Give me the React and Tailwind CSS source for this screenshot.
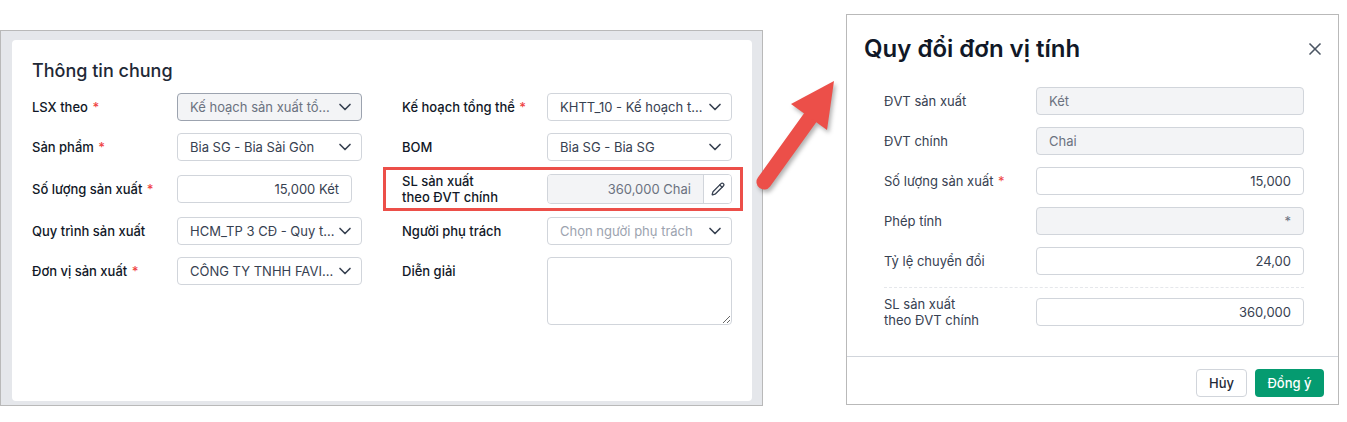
import { ChevronDown, Pencil, X } from 'lucide-react';

const font = 'font-["Inter","Liberation_Sans",sans-serif]';

function Required() {
  return <span className="ml-px text-[#ef4444]"> *</span>;
}

function Select({ value, placeholder, disabled }) {
  let tone = 'border-[#d1d5db] bg-white text-[#374151]';
  if (disabled) tone = 'border-[#9ca3af] bg-[#f3f4f6] text-[#6b7280]';
  if (placeholder) tone = 'border-[#d1d5db] bg-white text-[#9ca3af]';

  return (
    <div className={`flex h-7 w-[185px] items-center justify-between rounded border pr-[6px] pl-3 text-[13px] leading-4 ${tone}`}>
      <span className="truncate">{value}</span>
      <ChevronDown size={20} strokeWidth={2} className="shrink-0 text-[#374151]" />
    </div>
  );
}

function FormRow({ label, required, children, tall }) {
  return (
    <div className={`flex w-[330px] items-center ${tall ? 'h-8' : 'h-7'}`}>
      <div className="w-[145px] shrink-0 text-[13px] leading-4 font-medium text-[#111827]">
        {label}
        {required && <Required />}
      </div>
      {children}
    </div>
  );
}

function ModalRow({ label, required, value, readOnly, left }) {
  return (
    <div className="flex h-7 items-center">
      <div className="w-[152px] shrink-0 text-[13px] leading-4 text-[#374151]">
        {label}
        {required && <Required />}
      </div>
      <div
        className={`flex h-7 w-[268px] items-center rounded border border-[#d1d5db] px-3 text-[13px] leading-4 ${
          readOnly ? 'bg-[#f3f4f6] text-[#6b7280]' : 'bg-white text-[#374151]'
        } ${left ? 'justify-start' : 'justify-end'}`}
      >
        {value}
      </div>
    </div>
  );
}

function Arrow() {
  return (
    <svg
      className="absolute top-[70px] left-[750px] drop-shadow-[2px_3px_2px_rgba(0,0,0,0.3)]"
      width="100"
      height="130"
      viewBox="0 0 100 130"
      fill="none"
    >
      <line x1="14" y1="112" x2="60" y2="48" stroke="#ec4f49" strokeWidth="15" strokeLinecap="round" />
      <polygon points="84,11 41,34 77,60" fill="#ec4f49" />
    </svg>
  );
}

export default function App() {
  return (
    <div className={`relative flex h-[422px] w-[1347px] items-start overflow-hidden bg-white ${font}`}>
      <div className="mt-[30px] h-[376px] w-[763px] shrink-0 border border-[#b9b9b9] bg-[#e5e7eb] pt-[9px] pr-[10px] pb-[4px] pl-[11px]">
        <div className="relative h-full rounded bg-white pt-[19px] pl-5">
          <h2 className="h-[24px] text-lg leading-6 font-medium text-[#1f2937]">Thông tin chung</h2>
          <div className="mt-[10px] flex gap-10">
            <div className="flex flex-col gap-3">
              <FormRow label="LSX theo" required>
                <Select value="Kế hoạch sản xuất tổ..." disabled />
              </FormRow>
              <FormRow label="Sản phẩm" required>
                <Select value="Bia SG - Bia Sài Gòn" />
              </FormRow>
              <FormRow label="Số lượng sản xuất" required tall>
                <div className="flex h-7 w-[175px] items-center justify-end rounded border border-[#d1d5db] bg-white px-3 text-[13px] leading-4 text-[#374151]">
                  15,000 Két
                </div>
              </FormRow>
              <FormRow label="Quy trình sản xuất">
                <Select value="HCM_TP 3 CĐ - Quy t..." />
              </FormRow>
              <FormRow label="Đơn vị sản xuất" required>
                <Select value="CÔNG TY TNHH FAVI..." />
              </FormRow>
            </div>
            <div className="flex flex-col gap-3">
              <FormRow label="Kế hoạch tổng thể" required>
                <Select value="KHTT_10 - Kế hoạch t..." />
              </FormRow>
              <FormRow label="BOM">
                <Select value="Bia SG - Bia SG" />
              </FormRow>
              <FormRow
                tall
                label={
                  <>
                    SL sản xuất
                    <br />
                    theo ĐVT chính
                  </>
                }
              >
                <div className="flex h-[30px] w-[185px] overflow-hidden rounded border border-[#d1d5db] text-[13px] leading-4">
                  <div className="flex flex-1 items-center justify-end border-r border-[#d1d5db] bg-[#f3f4f6] px-3 text-[#6b7280]">
                    360,000 Chai
                  </div>
                  <div className="flex w-[27px] items-center justify-center bg-white text-[#374151]">
                    <Pencil size={14} strokeWidth={2.2} />
                  </div>
                </div>
              </FormRow>
              <FormRow label="Người phụ trách">
                <Select value="Chọn người phụ trách" placeholder />
              </FormRow>
              <div className="flex w-[330px] items-start">
                <div className="mt-[6px] w-[145px] shrink-0 text-[13px] leading-4 font-medium text-[#111827]">Diễn giải</div>
                <textarea readOnly className="h-[68px] w-[185px] rounded border border-[#d1d5db] bg-white" />
              </div>
            </div>
          </div>
          {/* red highlight drawn on top of the row */}
          <div className="absolute top-[127px] left-[371px] h-[44px] w-[360px] border-[3px] border-[#ec4f49]" />
        </div>
      </div>

      <Arrow />

      <div className="mt-[14px] ml-[83px] flex h-[391px] w-[493px] shrink-0 flex-col border border-[#b9b9b9] bg-white">
        <div className="flex h-[72px] shrink-0 items-start justify-between pt-5 pr-[13px] pl-[17px]">
          <h2 className="text-2xl leading-7 font-semibold text-[#111827]">Quy đổi đơn vị tính</h2>
          <X size={20} className="mt-1 text-[#4b5563]" />
        </div>
        <div className="flex h-[269px] shrink-0 flex-col pl-[37px]">
          <div className="flex flex-col gap-3">
            <ModalRow label="ĐVT sản xuất" value="Két" readOnly left />
            <ModalRow label="ĐVT chính" value="Chai" readOnly left />
            <ModalRow label="Số lượng sản xuất" required value="15,000" />
            <ModalRow label="Phép tính" value="*" readOnly />
            <ModalRow label="Tỷ lệ chuyển đổi" value="24,00" />
          </div>
          <div className="mt-3 mb-[10px] w-[420px] border-t border-dashed border-[#e5e7eb]" />
          <ModalRow
            label={
              <>
                SL sản xuất
                <br />
                theo ĐVT chính
              </>
            }
            value="360,000"
          />
        </div>
        <div className="flex flex-1 items-start justify-end gap-2 border-t border-[#d1d5db] pt-3 pr-[14px]">
          <button className="h-7 w-[51px] rounded border border-[#d1d5db] bg-white text-[13px] leading-4 font-medium text-[#1f2937]">Hủy</button>
          <button className="h-7 w-[69px] rounded bg-[#059b70] text-[13px] leading-4 font-medium text-white">Đồng ý</button>
        </div>
      </div>
    </div>
  );
}
